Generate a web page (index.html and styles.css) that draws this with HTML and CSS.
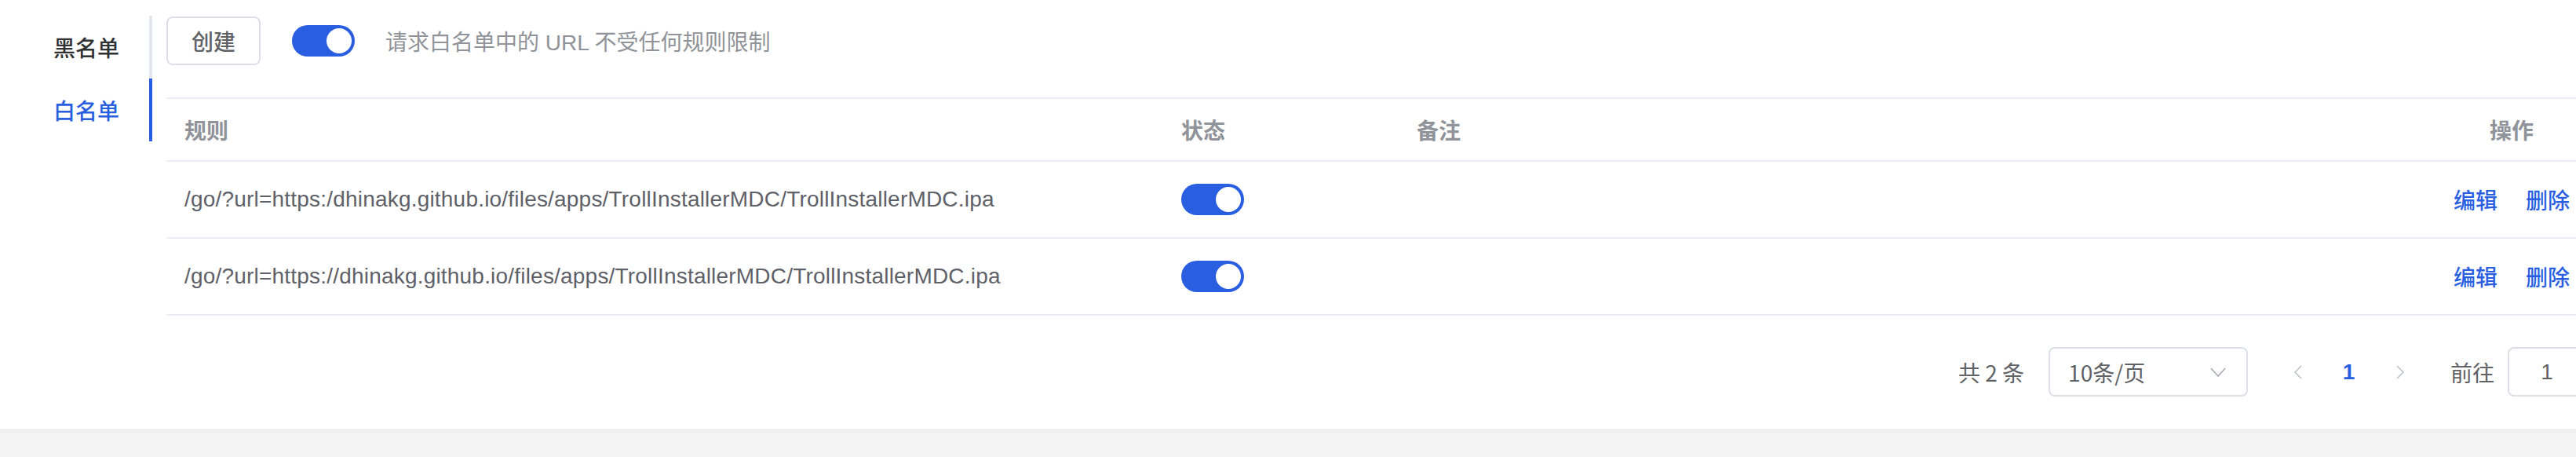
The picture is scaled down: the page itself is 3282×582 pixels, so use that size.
FILE: index.html
```html
<!DOCTYPE html>
<html lang="zh-CN">
<head>
<meta charset="utf-8">
<title>白名单</title>
<link rel="stylesheet" href="styles.css">
</head>
<body>
<div class="page">
  <div class="main">
    <nav class="tabs">
      <div class="tab">黑名单</div>
      <div class="tab active">白名单</div>
    </nav>
    <section class="content">
      <div class="toolbar">
        <button class="btn">创建</button>
        <span class="switch on"><span class="knob"></span></span>
        <span class="hint">请求白名单中的 URL 不受任何规则限制</span>
      </div>
      <div class="table">
        <div class="row head">
          <div class="cell">规则</div>
          <div class="cell">状态</div>
          <div class="cell">备注</div>
          <div class="cell center">操作</div>
        </div>
        <div class="row">
          <div class="cell url">/go/?url=https:/dhinakg.github.io/files/apps/TrollInstallerMDC/TrollInstallerMDC.ipa</div>
          <div class="cell"><span class="switch on"><span class="knob"></span></span></div>
          <div class="cell"></div>
          <div class="cell center"><a class="link">编辑</a><a class="link">删除</a></div>
        </div>
        <div class="row">
          <div class="cell url">/go/?url=https://dhinakg.github.io/files/apps/TrollInstallerMDC/TrollInstallerMDC.ipa</div>
          <div class="cell"><span class="switch on"><span class="knob"></span></span></div>
          <div class="cell"></div>
          <div class="cell center"><a class="link">编辑</a><a class="link">删除</a></div>
        </div>
      </div>
      <div class="pager">
        <span class="total">共 2 条</span>
        <span class="select">
          <span>10条/页</span>
          <svg class="chev" width="20" height="12" viewBox="0 0 20 12"><polyline points="1,1 10,11 19,1" fill="none" stroke="#a8abb2" stroke-width="1.6"/></svg>
        </span>
        <span class="pbtn"><svg width="10" height="18" viewBox="0 0 10 18"><polyline points="9,1 1,9 9,17" fill="none" stroke="#b8bbc2" stroke-width="1.4"/></svg></span>
        <span class="pbtn num">1</span>
        <span class="pbtn"><svg width="10" height="18" viewBox="0 0 10 18"><polyline points="1,1 9,9 1,17" fill="none" stroke="#b8bbc2" stroke-width="1.4"/></svg></span>
        <span class="jump">前往</span>
        <span class="input">1</span>
      </div>
    </section>
  </div>
  <div class="bottom"></div>
</div>
</body>
</html>
```

FILE: styles.css
```css
* { box-sizing: border-box; }
html, body {
  margin: 0;
  padding: 0;
  background: #ffffff;
  overflow: hidden;
}
body {
  font-family: "Liberation Sans", "Noto Sans CJK SC", sans-serif;
  font-size: 28px;
  color: #606266;
  width: 3282px;
  height: 582px;
}
.page {
  display: flex;
  flex-direction: column;
  height: 582px;
}
.main {
  display: flex;
  height: 546px;
  padding-top: 20px;
  background: #ffffff;
}
.tabs {
  width: 194px;
  flex-shrink: 0;
  align-self: flex-start;
}
.tab {
  height: 80px;
  line-height: 80px;
  text-align: right;
  padding-right: 38px;
  border-right: 4px solid #e4e7ed;
  font-family: "Noto Sans CJK SC", sans-serif;
  font-weight: 500;
  color: #303133;
}
.tab.active {
  color: #2a5ee0;
  border-right-color: #2a5ee0;
}
.content {
  margin-left: 18px;
  width: 3122px;
  flex-shrink: 0;
}
.toolbar {
  display: flex;
  align-items: center;
  height: 62px;
  margin-top: 1px;
}
.btn {
  height: 62px;
  width: 120px;
  border: 2px solid #dcdfe6;
  border-radius: 8px;
  background: #fff;
  font-family: "Noto Sans CJK SC", sans-serif;
  font-size: 28px;
  font-weight: 500;
  color: #606266;
  padding: 0;
}
.toolbar .switch { margin-left: 40px; }
.hint {
  margin-left: 39px;
  color: #909399;
  font-family: "Liberation Sans", "Noto Sans CJK SC", sans-serif;
}
.switch {
  display: inline-flex;
  align-items: center;
  justify-content: flex-end;
  width: 80px;
  height: 40px;
  border-radius: 20px;
  background: #2a5ee0;
  padding-right: 4px;
}
.knob {
  width: 32px;
  height: 32px;
  border-radius: 50%;
  background: #fff;
}
.table {
  margin-top: 41px;
  width: 3086px;
  border-top: 2px solid #ebeef5;
}
.row {
  display: grid;
  grid-template-columns: 1270px 300px 1320px 196px;
  height: 98px;
  border-bottom: 2px solid #ebeef5;
  align-items: center;
}
.row.head {
  height: 80px;
  font-family: "Noto Sans CJK SC", sans-serif;
  font-weight: 600;
  color: #909399;
}
.cell {
  padding-left: 23px;
  display: flex;
  align-items: center;
  white-space: nowrap;
}
.cell.url {
  letter-spacing: 0.2px;
  color: #5f6168;
}
.cell.center {
  padding-left: 0;
  justify-content: center;
}
.link {
  color: #2a5ee0;
  font-family: "Noto Sans CJK SC", sans-serif;
  font-weight: 500;
}
.link + .link { margin-left: 36px; }
.pager {
  margin-top: 40px;
  display: flex;
  align-items: center;
  height: 63px;
  padding-left: 2283px;
  font-family: "Noto Sans CJK SC", "Liberation Sans", sans-serif;
  color: #606266;
}
.total { margin-right: 31px; white-space: nowrap; }
.select {
  flex-shrink: 0;
  width: 254px;
  height: 63px;
  border: 2px solid #dcdfe6;
  border-radius: 8px;
  display: flex;
  align-items: center;
  justify-content: space-between;
  padding: 0 26px 0 23px;
  margin-right: 31px;
}
.pbtn {
  flex-shrink: 0;
  width: 65px;
  height: 63px;
  display: flex;
  align-items: center;
  justify-content: center;
}
.pbtn.num {
  color: #2a5ee0;
  font-family: "Liberation Sans", sans-serif;
  font-weight: 700;
}
.jump { margin-left: 32px; white-space: nowrap; }
.input {
  flex-shrink: 0;
  margin-left: 17px;
  width: 100px;
  height: 63px;
  border: 2px solid #dcdfe6;
  border-radius: 8px;
  display: flex;
  align-items: center;
  justify-content: center;
  font-family: "Liberation Sans", sans-serif;
}
.bottom {
  flex: 1;
  background: linear-gradient(#ececef 0, #f3f3f4 7px, #f3f3f4 100%);
}
```
